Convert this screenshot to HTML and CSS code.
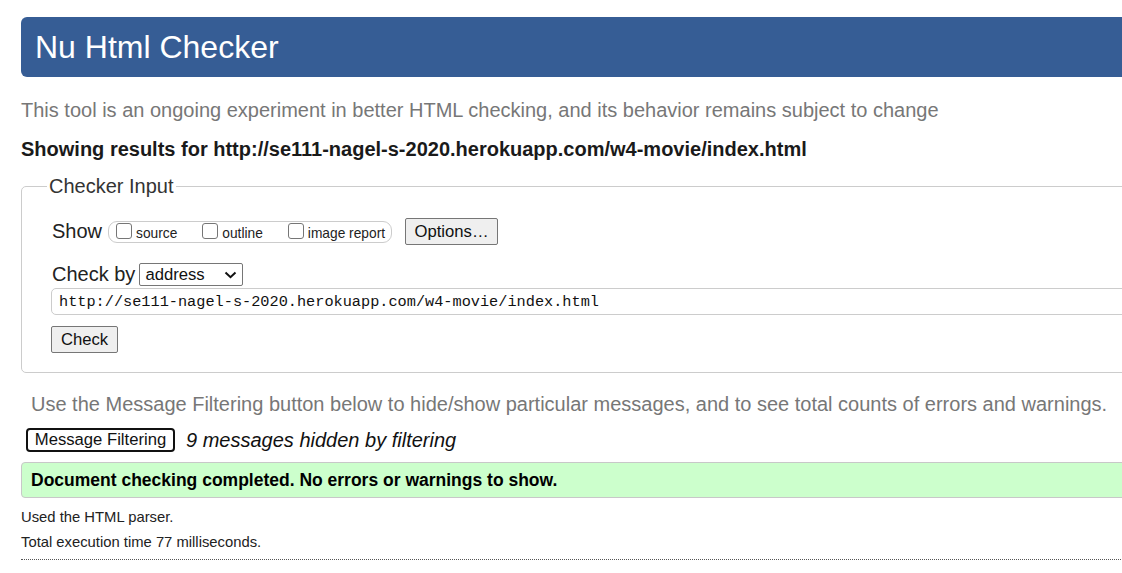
FILE: index.html
```html
<!DOCTYPE html>
<html lang="en">
<head>
<meta charset="utf-8">
<title>Nu Html Checker</title>
<link rel="stylesheet" href="styles.css">
</head>
<body>
<div class="page">
  <header class="banner"><h1 class="title">Nu Html Checker</h1></header>
  <p class="lead">This tool is an ongoing experiment in better HTML checking, and its behavior remains subject to change</p>
  <p class="results">Showing results for http://se111-nagel-s-2020.herokuapp.com/w4-movie/index.html</p>
  <fieldset class="checker">
    <legend class="legend">Checker Input</legend>
    <div class="row show-row">
      <span class="row-label">Show</span>
      <span class="opts">
        <label class="opt"><input type="checkbox" class="cb"><span>source</span></label>
        <label class="opt"><input type="checkbox" class="cb"><span>outline</span></label>
        <label class="opt"><input type="checkbox" class="cb"><span>image report</span></label>
      </span>
      <button class="btn options-btn" type="button">Options…</button>
    </div>
    <div class="row by-row">
      <span class="row-label">Check by</span>
      <span class="select"><span class="select-text">address</span><svg class="chev" width="13" height="8" viewBox="0 0 13 8"><path d="M1.5 1.5 L6.5 6.2 L11.5 1.5" fill="none" stroke="#111" stroke-width="2"/></svg></span>
    </div>
    <input class="url" type="text" readonly value="http://se111-nagel-s-2020.herokuapp.com/w4-movie/index.html">
    <button class="btn check-btn" type="button">Check</button>
  </fieldset>
  <p class="hint">Use the Message Filtering button below to hide/show particular messages, and to see total counts of errors and warnings.</p>
  <div class="filter-row">
    <button class="filter-btn" type="button">Message Filtering</button>
    <span class="hidden-count">9 messages hidden by filtering</span>
  </div>
  <div class="success">Document checking completed. No errors or warnings to show.</div>
  <p class="meta">Used the HTML parser.</p>
  <p class="meta meta-2">Total execution time 77 milliseconds.</p>
  <div class="rule"></div>
</div>
</body>
</html>
```
FILE: styles.css
```css
html, body {
  margin: 0;
  padding: 0;
  overflow: hidden;
  background: #fff;
}
body {
  font-family: "Liberation Sans", Arial, sans-serif;
  color: #111;
}
.page {
  padding: 17px 0 0 21px;
  width: 1200px;
}
.banner {
  height: 60px;
  background: #365d95;
  border-radius: 6px;
  display: flex;
  align-items: center;
  padding-left: 14px;
}
.title {
  margin: 0;
  font-size: 32px;
  font-weight: normal;
  color: #fff;
  line-height: 36px;
}
.lead {
  margin: 21px 0 0;
  font-size: 20px;
  line-height: 24px;
  color: #777;
}
.results {
  margin: 16px 0 0;
  font-size: 20px;
  line-height: 23px;
  font-weight: bold;
  color: #1a1a1a;
}
.checker {
  margin: 13px 0 0;
  border: 1px solid #ccc;
  border-radius: 5px;
  padding: 20px 0 19px 30px;
}
.legend {
  margin-left: -5px;
  padding: 0 2px;
  font-size: 20px;
  line-height: 24px;
  color: #333;
}
.row {
  display: flex;
  align-items: center;
}
.show-row {
  height: 27px;
}
.row-label {
  font-size: 20px;
  line-height: 23px;
  color: #222;
}
.opts {
  display: flex;
  align-items: center;
  margin-left: 6px;
  height: 20px;
  border: 1px solid #ccc;
  border-radius: 9px;
  padding: 0 6px 0 7px;
  gap: 25px;
}
.opt {
  display: flex;
  align-items: center;
  gap: 4px;
  font-size: 13.75px;
  color: #222;
}
.opt span {
  margin-top: 4px;
}
.cb {
  appearance: none;
  -webkit-appearance: none;
  margin: 0 0 1px 0;
  width: 16px;
  height: 16px;
  border: 1px solid #767676;
  border-radius: 3px;
  background: #fff;
  box-sizing: border-box;
}
.btn {
  font-family: "Liberation Sans", Arial, sans-serif;
  font-size: 16.67px;
  color: #111;
  background: #efefef;
  border: 1px solid #767676;
  border-radius: 2px;
  padding: 0;
  box-sizing: border-box;
}
.options-btn {
  margin-left: 13px;
  width: 93px;
  height: 27px;
}
.by-row {
  margin-top: 18px;
  height: 23px;
}
.select {
  margin-left: 4px;
  width: 104px;
  height: 23px;
  box-sizing: border-box;
  border: 1px solid #767676;
  border-radius: 2px;
  display: flex;
  align-items: center;
  justify-content: space-between;
  padding: 0 5px 0 5px;
  font-size: 16.67px;
  color: #111;
}
.chev {
  display: block;
}
.url {
  display: block;
  margin: 2px 0 0 -1px;
  width: 1150px;
  height: 27px;
  box-sizing: border-box;
  border: 1px solid #ccc;
  border-radius: 5px;
  padding: 0 0 0 7px;
  font-family: "Liberation Mono", "DejaVu Sans Mono", monospace;
  font-size: 15.25px;
  color: #111;
  outline: none;
}
.check-btn {
  display: block;
  margin: 11px 0 0 -1px;
  width: 67px;
  height: 27px;
}
.hint {
  margin: 20px 0 0 10px;
  font-size: 20px;
  line-height: 23px;
  color: #777;
}
.filter-row {
  margin-top: 12px;
  display: flex;
  align-items: center;
  height: 24px;
  padding-left: 5px;
}
.filter-btn {
  font-family: "Liberation Sans", Arial, sans-serif;
  font-size: 16.67px;
  color: #111;
  background: #fff;
  border: 2px solid #111;
  border-radius: 4px;
  height: 24px;
  width: 149px;
  padding: 0;
  box-sizing: border-box;
}
.hidden-count {
  margin-left: 11px;
  font-size: 20px;
  font-style: italic;
  color: #111;
}
.success {
  margin-top: 10px;
  height: 36px;
  box-sizing: border-box;
  background: #ccffcc;
  border: 1px solid #c8c8c8;
  border-radius: 4px;
  display: flex;
  align-items: center;
  padding-left: 9px;
  font-size: 17.5px;
  font-weight: bold;
  color: #000;
}
.meta {
  margin: 10px 0 0;
  font-size: 14.8px;
  line-height: 18px;
  color: #222;
}
.meta-2 {
  margin-top: 7px;
}
.rule {
  margin-top: 8px;
  border-top: 1px dotted #555;
}
```
